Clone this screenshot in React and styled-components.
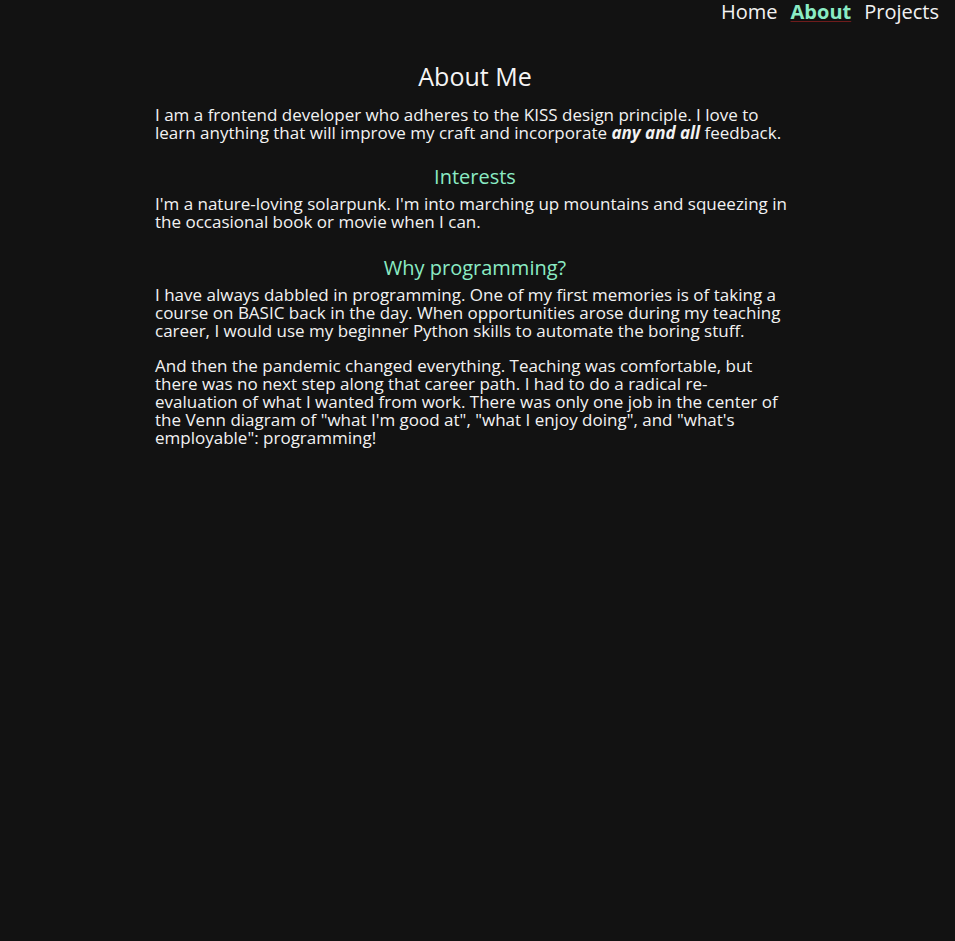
import React from 'react';
import styled, { createGlobalStyle } from 'styled-components';

const GlobalStyle = createGlobalStyle`
  html, body {
    margin: 0;
    padding: 0;
    background-color: #121212;
  }
  body {
    min-height: 941px;
    color: #f2f2f2;
    font-family: "Open Sans", "Noto Sans", sans-serif;
  }
`;

const NavBar = styled.nav`
  display: flex;
  justify-content: flex-end;
  gap: 13px;
  padding: 0 16px 0 0;
  height: 24px;
  font-size: 20px;
  line-height: 24px;

  a {
    color: #f2f2f2;
    text-decoration: none;
  }

  a.active {
    color: #8aebc4;
    font-weight: 700;
    text-decoration: underline;
    text-decoration-color: #6e1c1c;
    text-decoration-thickness: 1px;
    text-underline-offset: 2px;
  }
`;

const Main = styled.main`
  width: 640px;
  margin: 38px 0 0 155px;
  display: flex;
  flex-direction: column;
`;

const Title = styled.h1`
  margin: 0 0 16px;
  font-size: 25px;
  line-height: 28px;
  font-weight: 400;
  text-align: center;
  color: #f5f5f5;
`;

const SubTitle = styled.h2`
  margin: ${p => p.$top}px 0 7px;
  font-size: 20px;
  line-height: 22px;
  font-weight: 400;
  text-align: center;
  color: #8aebc4;
`;

const Para = styled.p`
  margin: 0 0 ${p => (p.$gap ? 17 : 0)}px;
  font-size: 17px;
  line-height: 18px;
  white-space: nowrap;

  em {
    font-weight: 700;
  }
`;

export default function App() {
  return (
    <>
      <GlobalStyle />
      <NavBar>
        <a href="#home">Home</a>
        <a href="#about" className="active">About</a>
        <a href="#projects">Projects</a>
      </NavBar>
      <Main>
        <Title>About Me</Title>
        <Para>
          I am a frontend developer who adheres to the KISS design principle. I love to<br />
          learn anything that will improve my craft and incorporate <em>any and all</em> feedback.
        </Para>
        <SubTitle $top={24}>Interests</SubTitle>
        <Para>
          I'm a nature-loving solarpunk. I'm into marching up mountains and squeezing in<br />
          the occasional book or movie when I can.
        </Para>
        <SubTitle $top={26}>Why programming?</SubTitle>
        <Para $gap>
          I have always dabbled in programming. One of my first memories is of taking a<br />
          course on BASIC back in the day. When opportunities arose during my teaching<br />
          career, I would use my beginner Python skills to automate the boring stuff.
        </Para>
        <Para>
          And then the pandemic changed everything. Teaching was comfortable, but<br />
          there was no next step along that career path. I had to do a radical re-<br />
          evaluation of what I wanted from work. There was only one job in the center of<br />
          the Venn diagram of "what I'm good at", "what I enjoy doing", and "what's<br />
          employable": programming!
        </Para>
      </Main>
    </>
  );
}
